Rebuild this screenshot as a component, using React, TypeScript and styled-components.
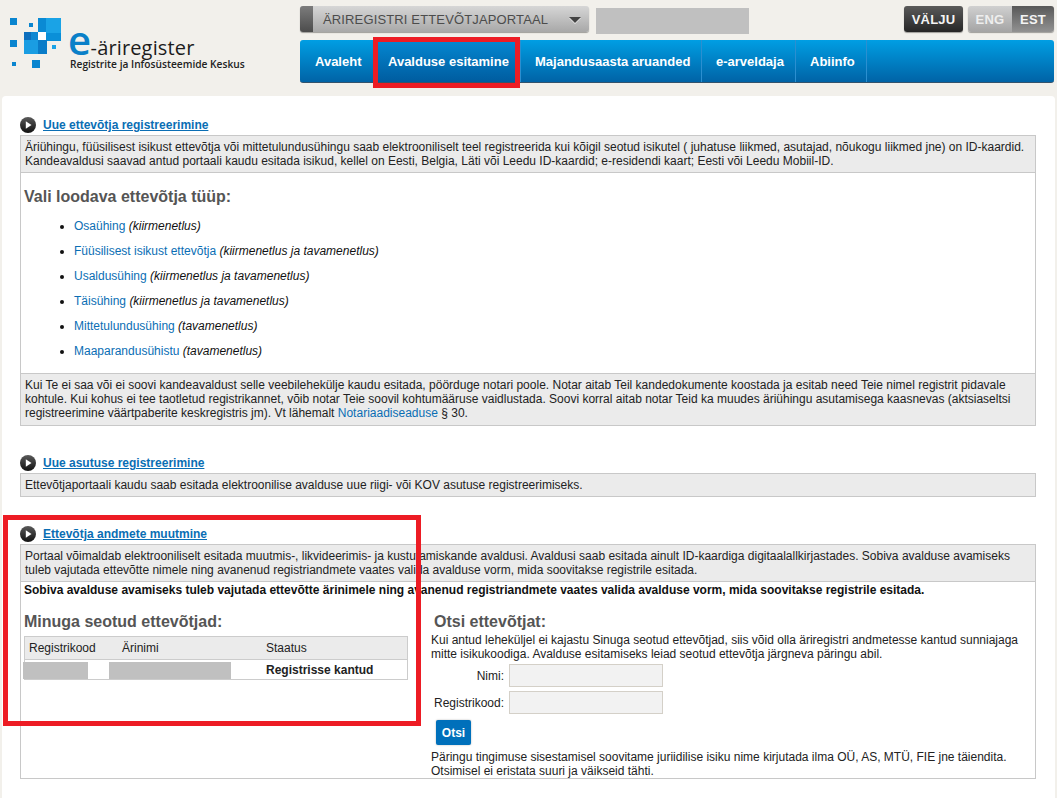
import React from "react";
import styled, { createGlobalStyle } from "styled-components";

const Global = createGlobalStyle`
  html, body { margin: 0; padding: 0; background: #f2f0eb; }
  body { font-family: "Liberation Sans", Arial, sans-serif; font-size: 12px; color: #222; }
  a { color: #0a6eb4; text-decoration: none; }
`;

const Page = styled.div`
  position: relative;
  width: 1057px;
  height: 798px;
  overflow: hidden;
`;
const Header = styled.header`
  height: 96px;
  display: flex;
`;
const LogoArea = styled.div`
  width: 291px;
  flex: none;
  display: flex;
  margin-left: 9px;
  padding-top: 17px;
  box-sizing: border-box;
`;
const LogoText = styled.div`
  display: flex;
  flex-direction: column;
  margin-left: 6px;
  padding-top: 10px;
`;
const Wordmark = styled.div`
  display: flex;
  align-items: baseline;
  height: 26px;
  line-height: 26px;
  color: #1c1c1c;
  font-family: "Open Sans", sans-serif;
  font-size: 20px;
  font-weight: 500;
  letter-spacing: 0.15px;
`;
const BigE = styled.span`
  color: #0a80c8;
  font-size: 40px;
  font-weight: 600;
  line-height: 26px;
  letter-spacing: -0.5px;
`;
const LogoSub = styled.div`
  margin: 4px 0 0 2px;
  font-family: "Open Sans", sans-serif;
  font-size: 10.2px;
  line-height: 14px;
  font-weight: 600;
  color: #222;
  white-space: nowrap;
`;
const HeadRight = styled.div`
  width: 757px;
  flex: none;
  padding-top: 6px;
  box-sizing: border-box;
`;
const TopRow = styled.div`
  display: flex;
  align-items: flex-start;
  height: 34px;
`;
const Portal = styled.div`
  width: 289px;
  height: 26px;
  box-sizing: border-box;
  border-radius: 3px;
  display: flex;
  align-items: center;
  background: linear-gradient(#d6d6d6, #a8a8a8);
  box-shadow: 0 1px 1px rgba(0,0,0,.35);
  overflow: hidden;
  color: #4c4c4c;
  font-size: 13px;
  letter-spacing: .14px;
`;
const PortalTab = styled.span`
  width: 13px;
  height: 100%;
  background: linear-gradient(#7c7c7c, #4c4c4c);
  flex: none;
  margin-right: 10px;
`;
const PortalLabel = styled.span`
  flex: 1;
`;
const Caret = styled.span`
  width: 0;
  height: 0;
  border-left: 6px solid transparent;
  border-right: 6px solid transparent;
  border-top: 6px solid #444;
  margin-right: 8px;
  margin-top: 2px;
  filter: drop-shadow(0 1px 0 #eee);
`;
const UserBlock = styled.div`
  width: 153px;
  height: 26px;
  margin: 2px 0 0 7px;
  background: #c0c0c0;
  flex: none;
`;
const Spacer = styled.div`
  flex: 1;
`;
const Exit = styled.div`
  width: 59px;
  height: 26px;
  margin-right: 5px;
  border-radius: 3px;
  background: linear-gradient(#5a5a5a, #262626);
  box-shadow: 0 1px 1px rgba(0,0,0,.35);
  color: #f4f4f4;
  font-weight: 700;
  font-size: 13px;
  letter-spacing: .2px;
  display: flex;
  align-items: center;
  justify-content: center;
`;
const Lang = styled.div`
  display: flex;
  width: 86px;
  height: 26px;
  margin-right: 3px;
  border-radius: 3px;
  overflow: hidden;
  box-shadow: 0 1px 1px rgba(0,0,0,.35);
`;
const LangItem = styled.div<{ $on?: boolean; $w: number }>`
  width: ${p => p.$w}px;
  display: flex;
  align-items: center;
  justify-content: center;
  font-weight: 700;
  font-size: 13px;
  letter-spacing: .2px;
  color: ${p => (p.$on ? "#f4f4f4" : "#eeeeee")};
  background: ${p => (p.$on ? "linear-gradient(#585858, #929292)" : "linear-gradient(#d0d0d0, #a4a4a4)")};
`;
const Nav = styled.nav`
  width: 754px;
  height: 42px;
  display: flex;
  border-radius: 3px;
  overflow: hidden;
  background: linear-gradient(#009ee3, #0063a6);
  border-bottom: 1px solid #33536c;
`;
const NavItem = styled.div<{ $active?: boolean; $w: number; $pad: number }>`
  display: flex;
  align-items: center;
  box-sizing: border-box;
  width: ${p => p.$w}px;
  padding-left: ${p => p.$pad}px;
  color: #fff;
  font-weight: 700;
  font-size: 13px;
  border-right: 1px solid #2b8fd0;
  background: ${p => (p.$active ? "linear-gradient(#0488d2, #005c9f)" : "transparent")};
  white-space: nowrap;
`;
const Main = styled.main`
  margin: 0 2px;
  height: 702px;
  background: #fff;
  border-radius: 4px 4px 0 0;
  padding: 0 19px 0 18px;
`;
const Section = styled.section<{ $top: number }>`
  padding-top: ${p => p.$top}px;
`;
const Title = styled.div`
  display: flex;
  align-items: center;
  height: 16px;
  margin-bottom: 2px;
  gap: 7px;
`;
const TitleLink = styled.a`
  color: #0a6eb4;
  font-size: 12px;
  font-weight: 700;
  text-decoration: underline;
`;
const Note = styled.div<{ $pb?: number }>`
  background: #ebebeb;
  border: 1px solid #c8c8c8;
  padding: 4px 4px ${p => p.$pb ?? 4}px 4px;
  font-size: 12px;
  line-height: 14px;
  color: #222;
`;
const Body = styled.div`
  border: 1px solid #c8c8c8;
  border-width: 0 1px;
  padding: 0 3px;
`;
const H2 = styled.h2`
  margin: 0;
  font-size: 16px;
  line-height: 20px;
  font-weight: 700;
  color: #555;
`;
const TypeHeading = styled(H2)`
  padding-top: 14px;
`;
const TypeList = styled.ul`
  margin: 0;
  padding: 7px 0 0 50px;
  height: 159px;
  list-style: disc;
`;
const TypeItem = styled.li`
  height: 25px;
  line-height: 25px;
  font-size: 12px;
  color: #111;
`;
const Columns = styled.div`
  display: grid;
  grid-template-columns: 406px 1fr;
  column-gap: 1px;
`;
const StrongLine = styled.div`
  font-weight: 700;
  font-size: 12px;
  line-height: 14px;
  padding-top: 1px;
  color: #111;
  height: 14px;
`;
const LeftHead = styled(H2)`
  margin-top: 15px;
  margin-bottom: 4px;
`;
const RightHead = styled(H2)`
  margin: 15px 0 1px 3px;
`;
const Table = styled.div`
  border: 1px solid #ccc;
  width: 382px;
`;
const Row = styled.div<{ $head?: boolean }>`
  display: grid;
  grid-template-columns: 93px 144px 1fr;
  height: ${p => (p.$head ? 22 : 19)}px;
  align-items: center;
  background: ${p => (p.$head ? "#ebebeb" : "#fff")};
  border-bottom: ${p => (p.$head ? "1px solid #ccc" : "0")};
  font-size: 12px;
  color: #222;
`;
const HeadCell = styled.div`
  padding-left: 4px;
`;
const Cells = styled.div<{ $w: number; $ml: number }>`
  width: ${p => p.$w}px;
  height: 17px;
  margin-left: ${p => p.$ml}px;
  background: #c0c0c0;
  align-self: end;
`;
const StatusCell = styled.div`
  padding-left: 4px;
  font-weight: 700;
`;
const Intro = styled.p`
  margin: 0;
  line-height: 14px;
  font-size: 12px;
  color: #222;
`;
const Form = styled.div`
  display: grid;
  grid-template-columns: 73px 154px;
  column-gap: 5px;
  row-gap: 4px;
  margin-top: 3px;
  align-items: center;
`;
const FieldLabel = styled.label`
  text-align: right;
  font-size: 12px;
  color: #222;
`;
const Field = styled.input`
  box-sizing: border-box;
  width: 154px;
  height: 23px;
  background: #f2f2f2;
  border: 1px solid #d4d0c8;
  padding: 0;
`;
const SearchBtn = styled.button`
  display: block;
  margin: 6px 0 0 5px;
  width: 35px;
  height: 25px;
  border: 0;
  padding: 0;
  border-radius: 2px;
  background: #0070bb;
  box-shadow: 0 0 2px rgba(0,0,0,.3);
  color: #fff;
  font: 700 12px "Liberation Sans", Arial, sans-serif;
`;
const Help = styled(Intro)`
  margin-top: 5px;
`;
const FinalBody = styled(Body)`
  height: 196px;
  border-bottom: 1px solid #c8c8c8;
`;
const Overlay = styled.div<{ $l: number; $t: number; $w: number; $h: number; $b: number }>`
  position: absolute;
  left: ${p => p.$l}px;
  top: ${p => p.$t}px;
  width: ${p => p.$w}px;
  height: ${p => p.$h}px;
  box-sizing: border-box;
  border: ${p => p.$b}px solid #ed1c24;
  pointer-events: none;
`;

const PlayIcon = () => (
  <svg width="16" height="16" viewBox="0 0 16 16">
    <defs>
      <linearGradient id="pg" x1="0" y1="0" x2="0" y2="1">
        <stop offset="0" stopColor="#5a5a5a" />
        <stop offset="1" stopColor="#111" />
      </linearGradient>
    </defs>
    <circle cx="8" cy="8" r="8" fill="url(#pg)" />
    <path d="M5.8 4.3 L11.5 8 L5.8 11.7 Z" fill="#fff" />
  </svg>
);

const LogoMark = () => (
  <svg width="53" height="52" viewBox="0 0 53 52" style={{ flex: "none" }}>
    <rect x="1" y="1" width="7" height="7" fill="#0a85cf" />
    <rect x="20" y="6" width="4" height="4" fill="#0a85cf" />
    <rect x="29" y="1" width="8" height="14" fill="#0a8ad4" />
    <rect x="37" y="1" width="15" height="15" fill="#1aa3e6" />
    <rect x="37" y="16" width="15" height="8" fill="#0a8fd8" />
    <rect x="15" y="15" width="7" height="8" fill="#0d6fbd" />
    <rect x="22" y="15" width="7" height="8" fill="#1088d2" />
    <rect x="29" y="15" width="8" height="8" fill="#ffffff" />
    <rect x="15" y="23" width="14" height="14" fill="#1a9de2" />
    <rect x="29" y="23" width="9" height="14" fill="#0a7cc8" />
    <rect x="1" y="23" width="7" height="7" fill="#0a85cf" />
    <rect x="43" y="28" width="4" height="4" fill="#1aa3e6" />
    <rect x="3" y="45" width="4" height="4" fill="#0a85cf" />
    <rect x="23" y="43" width="8" height="8" fill="#0a85cf" />
  </svg>
);

export default function App() {
  return (
    <Page>
      <Global />
      <Header>
        <LogoArea>
          <LogoMark />
          <LogoText>
            <Wordmark><BigE>e</BigE>-äriregister</Wordmark>
            <LogoSub>Registrite ja Infosüsteemide Keskus</LogoSub>
          </LogoText>
        </LogoArea>
        <HeadRight>
          <TopRow>
            <Portal>
              <PortalTab />
              <PortalLabel>ÄRIREGISTRI ETTEVÕTJAPORTAAL</PortalLabel>
              <Caret />
            </Portal>
            <UserBlock />
            <Spacer />
            <Exit>VÄLJU</Exit>
            <Lang>
              <LangItem $w={44}>ENG</LangItem>
              <LangItem $w={42} $on>EST</LangItem>
            </Lang>
          </TopRow>
          <Nav>
            <NavItem $w={74} $pad={15}>Avaleht</NavItem>
            <NavItem $w={147} $pad={14} $active>Avalduse esitamine</NavItem>
            <NavItem $w={181} $pad={14}>Majandusaasta aruanded</NavItem>
            <NavItem $w={94} $pad={14}>e-arveldaja</NavItem>
            <NavItem $w={71} $pad={14}>Abiinfo</NavItem>
          </Nav>
        </HeadRight>
      </Header>
      <Main>
        <Section $top={21}>
          <Title>
            <PlayIcon />
            <TitleLink>Uue ettevõtja registreerimine</TitleLink>
          </Title>
          <Note>
            Äriühingu, füüsilisest isikust ettevõtja või mittetulundusühingu saab elektrooniliselt teel registreerida kui kõigil seotud isikutel ( juhatuse liikmed, asutajad, nõukogu liikmed jne) on ID-kaardid.
            <br />
            Kandeavaldusi saavad antud portaali kaudu esitada isikud, kellel on Eesti, Belgia, Läti või Leedu ID-kaardid; e-residendi kaart; Eesti või Leedu Mobiil-ID.
          </Note>
          <Body>
            <TypeHeading>Vali loodava ettevõtja tüüp:</TypeHeading>
            <TypeList>
              <TypeItem><a>Osaühing</a> <em>(kiirmenetlus)</em></TypeItem>
              <TypeItem><a>Füüsilisest isikust ettevõtja</a> <em>(kiirmenetlus ja tavamenetlus)</em></TypeItem>
              <TypeItem><a>Usaldusühing</a> <em>(kiirmenetlus ja tavamenetlus)</em></TypeItem>
              <TypeItem><a>Täisühing</a> <em>(kiirmenetlus ja tavamenetlus)</em></TypeItem>
              <TypeItem><a>Mittetulundusühing</a> <em>(tavamenetlus)</em></TypeItem>
              <TypeItem><a>Maaparandusühistu</a> <em>(tavamenetlus)</em></TypeItem>
            </TypeList>
          </Body>
          <Note $pb={5}>
            Kui Te ei saa või ei soovi kandeavaldust selle veebilehekülje kaudu esitada, pöörduge notari poole. Notar aitab Teil kandedokumente koostada ja esitab need Teie nimel registrit pidavale
            <br />
            kohtule. Kui kohus ei tee taotletud registrikannet, võib notar Teie soovil kohtumääruse vaidlustada. Soovi korral aitab notar Teid ka muudes äriühingu asutamisega kaasnevas (aktsiaseltsi
            <br />
            registreerimine väärtpaberite keskregistris jm). Vt lähemalt <a>Notariaadiseaduse</a> § 30.
          </Note>
        </Section>
        <Section $top={29}>
          <Title>
            <PlayIcon />
            <TitleLink>Uue asutuse registreerimine</TitleLink>
          </Title>
          <Note>Ettevõtjaportaali kaudu saab esitada elektroonilise avalduse uue riigi- või KOV asutuse registreerimiseks.</Note>
        </Section>
        <Section $top={29}>
          <Title>
            <PlayIcon />
            <TitleLink>Ettevõtja andmete muutmine</TitleLink>
          </Title>
          <Note>
            Portaal võimaldab elektrooniliselt esitada muutmis-, likvideerimis- ja kustutamiskande avaldusi. Avaldusi saab esitada ainult ID-kaardiga digitaalallkirjastades. Sobiva avalduse avamiseks
            <br />
            tuleb vajutada ettevõtte nimele ning avanenud registriandmete vaates valida avalduse vorm, mida soovitakse registrile esitada.
          </Note>
          <FinalBody>
            <StrongLine>Sobiva avalduse avamiseks tuleb vajutada ettevõtte ärinimele ning avanenud registriandmete vaates valida avalduse vorm, mida soovitakse registrile esitada.</StrongLine>
            <Columns>
              <div>
                <LeftHead>Minuga seotud ettevõtjad:</LeftHead>
                <Table>
                  <Row $head>
                    <HeadCell>Registrikood</HeadCell>
                    <HeadCell>Ärinimi</HeadCell>
                    <HeadCell>Staatus</HeadCell>
                  </Row>
                  <Row>
                    <Cells $w={65} $ml={-2} />
                    <Cells $w={122} $ml={-9} />
                    <StatusCell>Registrisse kantud</StatusCell>
                  </Row>
                </Table>
              </div>
              <div>
                <RightHead>Otsi ettevõtjat:</RightHead>
                <Intro>
                  Kui antud leheküljel ei kajastu Sinuga seotud ettevõtjad, siis võid olla äriregistri andmetesse kantud sunniajaga
                  <br />
                  mitte isikukoodiga. Avalduse esitamiseks leiad seotud ettevõtja järgneva päringu abil.
                </Intro>
                <Form>
                  <FieldLabel>Nimi:</FieldLabel>
                  <Field />
                  <FieldLabel>Registrikood:</FieldLabel>
                  <Field />
                </Form>
                <SearchBtn>Otsi</SearchBtn>
                <Help>
                  Päringu tingimuse sisestamisel soovitame juriidilise isiku nime kirjutada ilma OÜ, AS, MTÜ, FIE jne täiendita.
                  <br />
                  Otsimisel ei eristata suuri ja väikseid tähti.
                </Help>
              </div>
            </Columns>
          </FinalBody>
        </Section>
      </Main>
      <Overlay $l={373} $t={37} $w={147} $h={51} $b={5} />
      <Overlay $l={3} $t={515} $w={418} $h={211} $b={5} />
    </Page>
  );
}
